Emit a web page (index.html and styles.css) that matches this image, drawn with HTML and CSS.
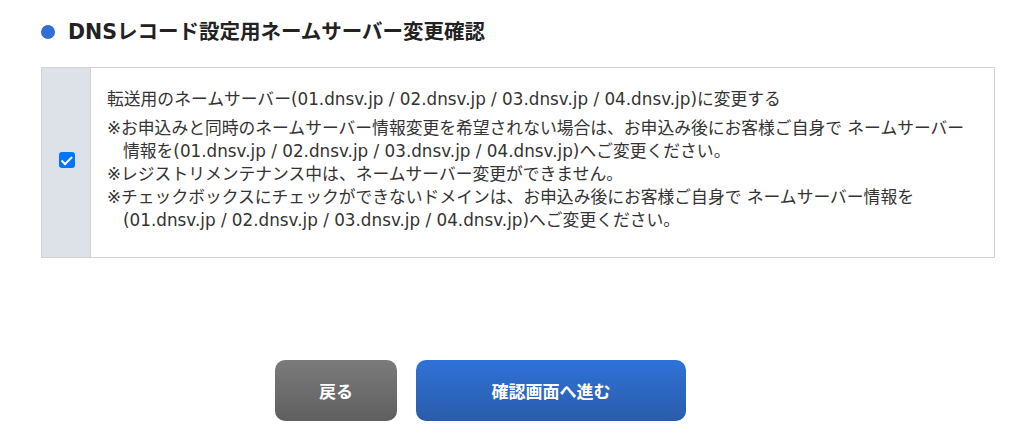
FILE: index.html
```html
<!DOCTYPE html>
<html lang="ja">
<head>
<meta charset="utf-8">
<title>DNSレコード設定用ネームサーバー変更確認</title>
<link rel="stylesheet" href="styles.css">
</head>
<body>
<div class="page">
  <h2 class="title"><span class="dot"></span>DNSレコード設定用ネームサーバー変更確認</h2>
  <div class="opt">
    <div class="opt-check"><input type="checkbox" class="chk" checked></div>
    <div class="opt-body">
      <p class="lead">転送用のネームサーバー(01.dnsv.jp / 02.dnsv.jp / 03.dnsv.jp / 04.dnsv.jp)に変更する</p>
      <ul class="notes">
        <li>※お申込みと同時のネームサーバー情報変更を希望されない場合は、お申込み後にお客様ご自身で ネームサーバー<br>情報を(01.dnsv.jp / 02.dnsv.jp / 03.dnsv.jp / 04.dnsv.jp)へご変更ください。</li>
        <li>※レジストリメンテナンス中は、ネームサーバー変更ができません。</li>
        <li>※チェックボックスにチェックができないドメインは、お申込み後にお客様ご自身で ネームサーバー情報を<br>(01.dnsv.jp / 02.dnsv.jp / 03.dnsv.jp / 04.dnsv.jp)へご変更ください。</li>
      </ul>
    </div>
  </div>
  <div class="actions">
    <button type="button" class="btn btn-back">戻る</button>
    <button type="button" class="btn btn-next">確認画面へ進む</button>
  </div>
</div>
</body>
</html>
```

FILE: styles.css
```css
html, body {
  margin: 0;
  padding: 0;
  background: #ffffff;
}
body {
  font-family: "DejaVu Sans", "Noto Sans CJK JP", sans-serif;
  color: #333333;
}
.page {
  padding: 18px 0 0 41px;
  width: 954px;
}
.title {
  display: flex;
  align-items: center;
  margin: 0;
  font-size: 20.5px;
  line-height: 28px;
  font-weight: bold;
  color: #222222;
}
.dot {
  width: 14px;
  height: 14px;
  border-radius: 50%;
  background: #2f6fd6;
  margin-right: 13px;
  flex: none;
}
.opt {
  display: flex;
  margin-top: 21px;
  border: 1px solid #d3d3d3;
}
.opt-check {
  width: 48px;
  flex: none;
  background: #dde1e8;
  border-right: 1px solid #d3d3d3;
  display: flex;
  align-items: center;
  justify-content: center;
}
.chk {
  appearance: none;
  -webkit-appearance: none;
  position: relative;
  width: 16px;
  height: 16px;
  margin: 0 0 5px 1px;
  border-radius: 3px;
  background: #0075ff;
}
.chk::after {
  content: "";
  position: absolute;
  left: 5px;
  top: 1.5px;
  width: 4px;
  height: 8.5px;
  border: solid #ffffff;
  border-width: 0 2.5px 2.5px 0;
  transform: rotate(45deg);
}
.opt-body {
  flex: 1;
  padding: 20px 16px 25px 16px;
  font-size: 16.8px;
  line-height: 23px;
}
.lead {
  margin: 0 0 6px 0;
}
.notes {
  list-style: none;
  margin: 0;
  padding: 0;
}
.notes li {
  padding-left: 16px;
  text-indent: -16px;
}
.actions {
  display: flex;
  gap: 19px;
  margin-top: 102px;
  padding-left: 234px;
}
.btn {
  height: 61px;
  border: none;
  border-radius: 10px;
  color: #ffffff;
  font-family: "DejaVu Sans", "Noto Sans CJK JP", sans-serif;
  font-size: 17px;
  font-weight: bold;
  cursor: pointer;
}
.btn-back {
  width: 122px;
  background: linear-gradient(#7b7b7b, #5f5f5f);
}
.btn-next {
  width: 270px;
  background: linear-gradient(#2f72d8, #2a5ca9);
}
```
